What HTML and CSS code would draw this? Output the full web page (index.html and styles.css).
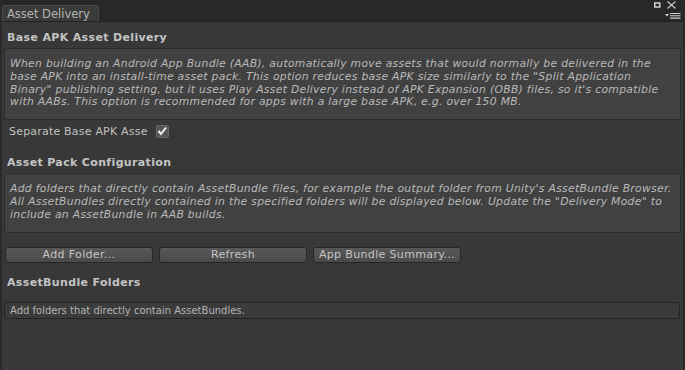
FILE: index.html
```html
<!DOCTYPE html>
<html lang="en">
<head>
    <meta charset="UTF-8">
    <title>Asset Delivery</title>
    <link rel="stylesheet" href="styles.css">
</head>
<body>
    <div class="window">
        <div class="tabbar">
            <div class="tab">Asset Delivery</div>
            <div class="window-controls">
                <div class="controls-top">
                    <svg width="7" height="6" viewBox="0 0 7 6"><rect x="0.75" y="1" width="5" height="4" fill="none" stroke="#cfcfcf" stroke-width="1.5"/></svg>
                    <svg width="9" height="8" viewBox="0 0 9 8"><path d="M0.5 0.5 L8.5 7.5 M8.5 0.5 L0.5 7.5" stroke="#c8c8c8" stroke-width="1.1"/></svg>
                </div>
                <svg class="menu-icon" width="16" height="6" viewBox="0 0 16 6"><path d="M0 1 L4 1 L2 3.5 Z" fill="#d0d0d0"/><path d="M5 0.5 H15.5 M5 2.8 H15.5 M5 5.1 H15.5" stroke="#d0d0d0" stroke-width="1.1"/></svg>
            </div>
        </div>
        <div class="content">
            <h2 class="section-title">Base APK Asset Delivery</h2>
            <div class="help-box">
                When building an Android App Bundle (AAB), automatically move assets that would normally be delivered in the<br>
                base APK into an install-time asset pack. This option reduces base APK size similarly to the "Split Application<br>
                Binary" publishing setting, but it uses Play Asset Delivery instead of APK Expansion (OBB) files, so it's compatible<br>
                with AABs. This option is recommended for apps with a large base APK, e.g. over 150 MB.
            </div>
            <div class="toggle-row">
                <span class="toggle-label">Separate Base APK Asse</span>
                <span class="checkbox">
                    <svg width="10" height="10" viewBox="0 0 10 10"><path d="M1.5 5 L4 8 L9 1.5" fill="none" stroke="#f4f4f4" stroke-width="2"/></svg>
                </span>
            </div>

            <h2 class="section-title">Asset Pack Configuration</h2>
            <div class="help-box help-box-short">
                Add folders that directly contain AssetBundle files, for example the output folder from Unity's AssetBundle Browser.<br>
                All AssetBundles directly contained in the specified folders will be displayed below. Update the "Delivery Mode" to<br>
                include an AssetBundle in AAB builds.
            </div>
            <div class="button-row">
                <button class="btn">Add Folder...</button>
                <button class="btn">Refresh</button>
                <button class="btn">App Bundle Summary...</button>
            </div>

            <h2 class="section-title">AssetBundle Folders</h2>
            <div class="info-field">Add folders that directly contain AssetBundles.</div>
        </div>
    </div>
</body>
</html>
```

FILE: styles.css
```css
body {
    margin: 0;
    background-color: #383838;
    font-family: "DejaVu Sans", Verdana, sans-serif;
    font-size: 11px;
    color: #c2c2c2;
}
.window {
    height: 370px;
    border-left: 2px solid #2a2a2a;
    border-right: 2px solid #2a2a2a;
    box-sizing: border-box;
    overflow: hidden;
}
.tabbar {
    height: 22px;
    box-sizing: border-box;
    background-color: #282828;
    border-bottom: 1px solid #232323;
    display: flex;
    align-items: flex-end;
    justify-content: space-between;
}
.tab {
    width: 91px;
    height: 15px;
    padding-left: 4px;
    background-color: #3a3a3a;
    border: 1px solid #4a4a4a;
    border-bottom: none;
    border-radius: 3px 3px 0 0;
    color: #b4b4b4;
    font-size: 11.5px;
    line-height: 16px;
}
.window-controls {
    align-self: stretch;
    display: flex;
    flex-direction: column;
    align-items: flex-end;
    padding: 1px 2px 0 0;
}
.controls-top {
    display: flex;
    gap: 6px;
    align-items: center;
    margin-right: 5px;
}
.menu-icon {
    margin-top: 4px;
}
.content {
    padding: 7px 2px 0 2px;
}
.section-title {
    margin: 0;
    padding-left: 3px;
    font-size: 11px;
    font-weight: bold;
    color: #c4c4c4;
    letter-spacing: 0.35px;
    height: 17px;
    line-height: 17px;
}
.help-box {
    margin: 2px 0 0 0;
    padding: 9px 6px 10px 5px;
    background-color: #414141;
    border: 1px solid #2c2c2c;
    border-radius: 2px;
    font-style: italic;
    font-size: 10.8px;
    letter-spacing: 0.3px;
    line-height: 12.75px;
    color: #b9b9b9;
    white-space: nowrap;
    overflow: hidden;
}
.help-box-short {
    padding-bottom: 11px;
}
.toggle-row {
    display: flex;
    align-items: center;
    gap: 8px;
    height: 20px;
    padding-left: 5px;
    margin: 1px 0 13px 0;
}
.toggle-label {
    font-size: 11px;
    letter-spacing: 0.2px;
    color: #c0c0c0;
}
.checkbox {
    width: 11px;
    height: 11px;
    border: 1px solid #666666;
    background-color: #555555;
    border-radius: 2px;
    display: flex;
    align-items: center;
    justify-content: center;
}
.button-row {
    display: flex;
    gap: 6px;
    margin: 14px 0 11px 1px;
}
.btn {
    width: 148px;
    height: 16px;
    padding: 0;
    background: linear-gradient(#585858, #4a4a4a);
    border: 1px solid #262626;
    border-radius: 3px;
    font-family: "DejaVu Sans", Verdana, sans-serif;
    font-size: 11px;
    letter-spacing: 0.35px;
    line-height: 14px;
    color: #c4c4c4;
}
.info-field {
    margin: 11px 1px 0 0;
    height: 15px;
    line-height: 15px;
    padding-left: 5px;
    background-color: #3b3b3b;
    border: 1px solid #242424;
    border-radius: 2px;
    font-size: 10px;
    color: #b4b4b4;
}
```
